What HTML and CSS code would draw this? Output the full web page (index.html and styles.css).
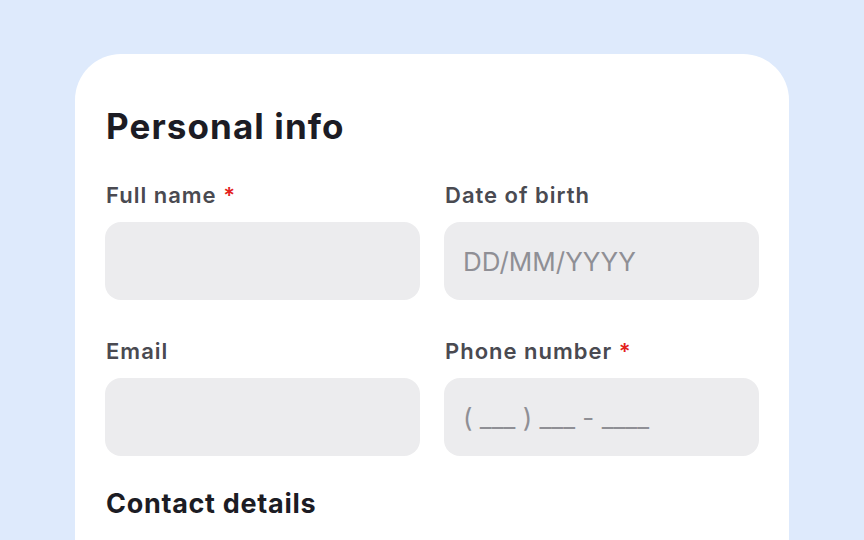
FILE: index.html
```html
<!DOCTYPE html>
<html>
<head>
<meta charset="utf-8">
<link rel="stylesheet" href="styles.css">
</head>
<body>
<div class="page">
  <div class="card">
    <h1 class="title">Personal info</h1>
    <div class="grid">
      <div class="field">
        <div class="label">Full name <span class="req">*</span></div>
        <div class="input"></div>
      </div>
      <div class="field">
        <div class="label">Date of birth</div>
        <div class="input"><span class="ph">DD/MM/YYYY</span></div>
      </div>
      <div class="field">
        <div class="label">Email</div>
        <div class="input"></div>
      </div>
      <div class="field">
        <div class="label">Phone number <span class="req">*</span></div>
        <div class="input"><span class="ph">( ___ ) ___ - ____</span></div>
      </div>
    </div>
    <h2 class="subtitle">Contact details</h2>
  </div>
</div>
</body>
</html>
```
FILE: styles.css
```css
* { box-sizing: border-box; }
html, body { margin: 0; padding: 0; }
body {
  background: #deeafc;
  font-family: Inter, "Noto Sans", sans-serif;
  width: 864px;
  height: 540px;
  overflow: hidden;
}
.page {
  padding: 54px 75px 0 75px;
}
.card {
  background: #ffffff;
  border-radius: 46px 46px 0 0;
  padding: 50px 30px 0 30px;
  height: 486px;
  overflow: hidden;
}
.title {
  margin: 0 0 0 1px;
  font-size: 35px;
  font-weight: 700;
  letter-spacing: 1.1px;
  color: #1c1c24;
  line-height: 44px;
}
.grid {
  margin-top: 33px;
  display: grid;
  grid-template-columns: 315px 315px;
  column-gap: 24px;
  row-gap: 37px;
}
.label {
  font-size: 22px;
  font-weight: 600;
  color: #4a4a51;
  line-height: 28px;
  letter-spacing: 1px;
  padding-left: 1px;
}
.req { color: #e3211c; }
.input {
  margin-top: 13px;
  height: 78px;
  background: #ececee;
  border-radius: 16px;
  display: flex;
  align-items: center;
  padding-left: 19px;
}
.ph {
  font-size: 26px;
  color: #8f8f95;
  font-weight: 400;
  white-space: pre;
}
.subtitle {
  margin: 31px 0 0 1px;
  font-size: 27px;
  font-weight: 700;
  color: #1c1c24;
  letter-spacing: 0.7px;
  line-height: 34px;
}
```
